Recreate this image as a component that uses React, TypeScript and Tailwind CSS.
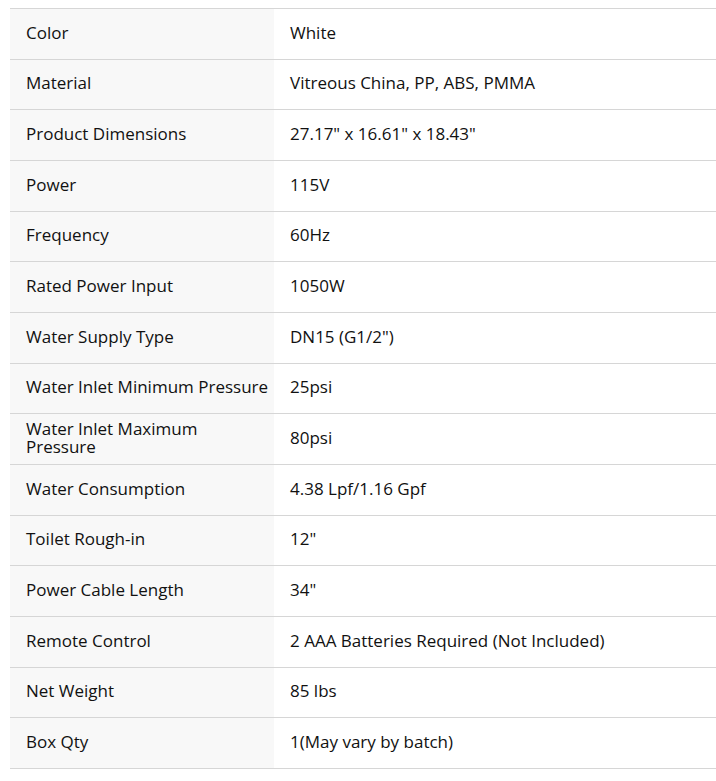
import React from 'react';

const specs: [string, string][] = [
  ['Color', 'White'],
  ['Material', 'Vitreous China, PP, ABS, PMMA'],
  ['Product Dimensions', '27.17" x 16.61" x 18.43"'],
  ['Power', '115V'],
  ['Frequency', '60Hz'],
  ['Rated Power Input', '1050W'],
  ['Water Supply Type', 'DN15 (G1/2")'],
  ['Water Inlet Minimum Pressure', '25psi'],
  ['Water Inlet Maximum Pressure', '80psi'],
  ['Water Consumption', '4.38 Lpf/1.16 Gpf'],
  ['Toilet Rough-in', '12"'],
  ['Power Cable Length', '34"'],
  ['Remote Control', '2 AAA Batteries Required (Not Included)'],
  ['Net Weight', '85 lbs'],
  ['Box Qty', '1(May vary by batch)'],
];

export default function App() {
  return (
    <div className="bg-white min-h-screen pt-2 pl-[10px] font-['Open_Sans',sans-serif] text-[#111]">
      <div className="w-[720px] border-t border-[#d6d6d6]">
        {specs.map(([label, value]) => (
          <div key={label} className="flex h-[50.67px] border-b border-[#d6d6d6]">
            <div className="w-[264px] shrink-0 bg-[#f8f8f8] flex items-center pl-4 pr-1 pb-[2px] text-[17px] leading-[18px]">
              {label}
            </div>
            <div className="flex-1 flex items-center px-4 pb-[2px] text-[17px] leading-[18px]">
              {value}
            </div>
          </div>
        ))}
      </div>
    </div>
  );
}
